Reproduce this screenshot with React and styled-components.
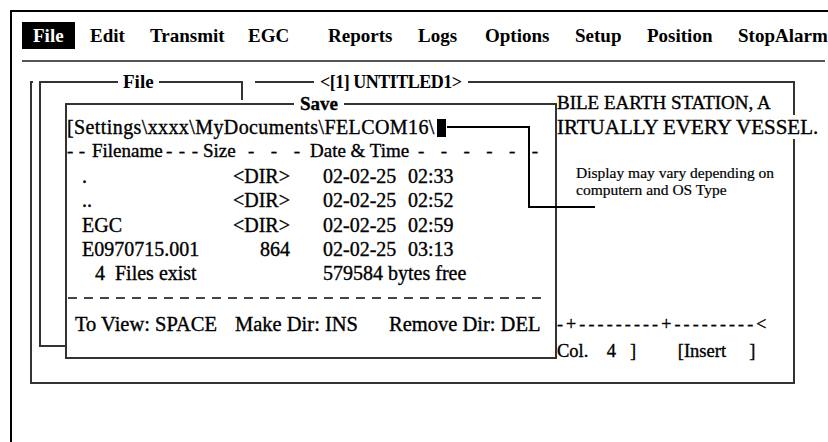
import React from 'react'
import styled, { createGlobalStyle } from 'styled-components'

const GlobalStyle = createGlobalStyle`
  html, body { margin: 0; padding: 0; background: #fff; overflow: hidden; }
  body { font-family: "Liberation Serif", "Times New Roman", serif; color: #000; }
`

const line = '#333'
// the scanned screen text reads heavier than plain regular weight
const ink = '-webkit-text-stroke: 0.35px #000;'

const Screen = styled.div`
  margin: 10px 0 0 10px;
  width: 840px;
  height: 450px;
  border-left: 2px solid #000;
  border-top: 2px solid #000;
  display: flex;
  flex-direction: column;
`

const MenuBar = styled.nav`
  margin: 10px 0 0 10px;
  width: 803px;
  padding-bottom: 11px;
  border-bottom: 2px solid #555;
  display: grid;
  grid-template-columns: 68px 60px 98px 80px 90px 67px 90px 72px 91px auto;
  align-items: center;
`

const MenuItem = styled.span`
  justify-self: start;
  height: 27px;
  line-height: 27px;
  font-size: 19px;
  font-weight: bold;
  white-space: nowrap;
  padding: ${p => (p.$active ? '0 11px' : '0')};
  background: ${p => (p.$active ? '#000' : 'transparent')};
  color: ${p => (p.$active ? '#fff' : '#000')};
`

const Desktop = styled.div`
  position: relative;
  flex: 1;
`

// window frame title sitting on the top border line
const FrameTitle = styled.span`
  position: absolute;
  top: -12px;
  left: ${p => p.$left}px;
  padding: 0 ${p => p.$pad}px;
  background: #fff;
  font-size: ${p => p.$size || 19}px;
  letter-spacing: ${p => p.$tight ? '-0.5px' : '0'};
  font-weight: bold;
  line-height: 22px;
  white-space: nowrap;
`

const EditorWindow = styled.section`
  position: absolute;
  left: 18px;
  top: 19px;
  width: 765px;
  height: 303px;
  box-sizing: border-box;
  border: 2px solid ${line};
  padding: 8px 0 19px 525px;
  display: flex;
  flex-direction: column;
  align-items: flex-start;
`

const EditorLine = styled.span`
  font-size: ${p => p.$size}px;
  line-height: 24px;
  white-space: pre;
  background: #fff;
  ${ink}
`

const Ruler = styled.span`
  margin-top: auto;
  font-size: 18px;
  line-height: 24px;
  letter-spacing: 3.1px;
  white-space: pre;
  ${ink}
`

const StatusLine = styled.span`
  margin-top: 3px;
  font-size: 18.5px;
  line-height: 24px;
  white-space: pre;
  ${ink}
`

const FilePanel = styled.div`
  position: absolute;
  left: 21px;
  top: 10px;
  padding: 9px 12px 0 6px;
  background: #fff;
`

const PanelFrame = styled.div`
  position: relative;
  width: 204px;
  height: 266px;
  box-sizing: border-box;
  border: 2px solid ${line};
`

const SaveDialog = styled.div`
  position: absolute;
  left: 53px;
  top: 38px;
  padding-top: 3px;
  background: #fff;
`

const SaveFrame = styled.div`
  position: relative;
  width: 492px;
  height: 256px;
  box-sizing: border-box;
  border: 2px solid ${line};
  padding-top: 10px;
  font-size: 20px;
  line-height: 24.4px;
  ${ink}
`

const PathRow = styled.div`
  letter-spacing: 0.4px;
  white-space: nowrap;
`

const Cursor = styled.span`
  display: inline-block;
  width: 9px;
  height: 18px;
  margin-left: 2px;
  vertical-align: -3px;
  background: #000;
`

const HeaderRow = styled.div`
  display: grid;
  grid-template-columns: 25px 74px 37px 45px 62px 108px 120px;
  font-size: 19px;
  white-space: nowrap;
`

const DashRun = styled.span`
  display: flex;
  justify-content: space-between;
  padding-right: ${p => p.$gap || 0}px;
`

const FileRow = styled.div`
  display: grid;
  grid-template-columns: 150px 58px 118px 1fr;
  padding-left: 15px;
  white-space: pre;
`

const Cell = styled.span`
  text-align: ${p => p.$align || 'left'};
  padding-left: ${p => p.$indent || 0}px;
  grid-column: ${p => p.$span || 'auto'};
`

const DashedRule = styled.div`
  margin: 11px 13px 0 1px;
  height: 2px;
  background: repeating-linear-gradient(to right, #444 0 9px, transparent 9px 16px);
`

const KeyRow = styled.div`
  margin-top: 13px;
  padding-left: 8px;
  display: grid;
  grid-template-columns: 160px 154px auto;
  font-size: 20.5px;
  white-space: nowrap;
`

const Callout = styled.svg`
  position: absolute;
  left: 434px;
  top: 63px;
  overflow: visible;
`

const Note = styled.p`
  position: absolute;
  left: 564px;
  top: 102px;
  margin: 0;
  font-size: 15.5px;
  line-height: 17px;
  -webkit-text-stroke: 0.2px #000;
`

const Dashes = ({ n, gap }) => (
  <DashRun $gap={gap}>
    {Array.from({ length: n }, (_, i) => <span key={i}>-</span>)}
  </DashRun>
)

const menu = ['File', 'Edit', 'Transmit', 'EGC', 'Reports', 'Logs', 'Options', 'Setup', 'Position', 'StopAlarm']

const files = [
  { name: '.', size: '<DIR>', date: '02-02-25', time: '02:33' },
  { name: '..', size: '<DIR>', date: '02-02-25', time: '02:52' },
  { name: 'EGC', size: '<DIR>', date: '02-02-25', time: '02:59' },
  { name: 'E0970715.001', size: '864', date: '02-02-25', time: '03:13' },
]

export default function App() {
  return (
    <>
      <GlobalStyle />
      <Screen>
        <MenuBar>
          {menu.map((m, i) => (
            <MenuItem key={m} $active={i === 0}>{m}</MenuItem>
          ))}
        </MenuBar>
        <Desktop>
          <EditorWindow>
            <FrameTitle $left={282} $pad={6} $size={18} $tight>{'<[1] UNTITLED1>'}</FrameTitle>
            <EditorLine $size={19}>BILE EARTH STATION, A</EditorLine>
            <EditorLine $size={21}>IRTUALLY EVERY VESSEL.</EditorLine>
            <Ruler>-+---------+---------&lt;</Ruler>
            <StatusLine>{'Col.    4   ]         [Insert     ]'}</StatusLine>
          </EditorWindow>

          <FilePanel>
            <PanelFrame>
              <FrameTitle $left={77} $pad={5}>File</FrameTitle>
            </PanelFrame>
          </FilePanel>

          <SaveDialog>
            <SaveFrame>
              <FrameTitle $left={227} $pad={6}>Save</FrameTitle>
              <PathRow>
                [Settings\xxxx\MyDocuments\FELCOM16\<Cursor />
              </PathRow>
              <HeaderRow>
                <Dashes n={2} gap={7} />
                <span>Filename</span>
                <Dashes n={3} gap={5} />
                <span>Size</span>
                <Dashes n={3} gap={10} />
                <span>Date &amp; Time</span>
                <Dashes n={6} />
              </HeaderRow>
              {files.map(f => (
                <FileRow key={f.name}>
                  <Cell>{f.name}</Cell>
                  <Cell $align="right">{f.size}</Cell>
                  <Cell $indent={33}>{f.date}</Cell>
                  <Cell>{f.time}</Cell>
                </FileRow>
              ))}
              <FileRow>
                <Cell $span="1 / 3" $indent={13}>{'4  Files exist'}</Cell>
                <Cell $span="3 / 5" $indent={33}>579584 bytes free</Cell>
              </FileRow>
              <DashedRule />
              <KeyRow>
                <span>To View: SPACE</span>
                <span>Make Dir: INS</span>
                <span>Remove Dir: DEL</span>
              </KeyRow>
            </SaveFrame>
          </SaveDialog>

          <Callout width="150" height="90">
            <polyline points="1,2 83,2 83,82 149,82" fill="none" stroke="#000" strokeWidth="2" />
          </Callout>
          <Note>
            Display may vary depending on
            <br />
            computern and OS Type
          </Note>
        </Desktop>
      </Screen>
    </>
  )
}
